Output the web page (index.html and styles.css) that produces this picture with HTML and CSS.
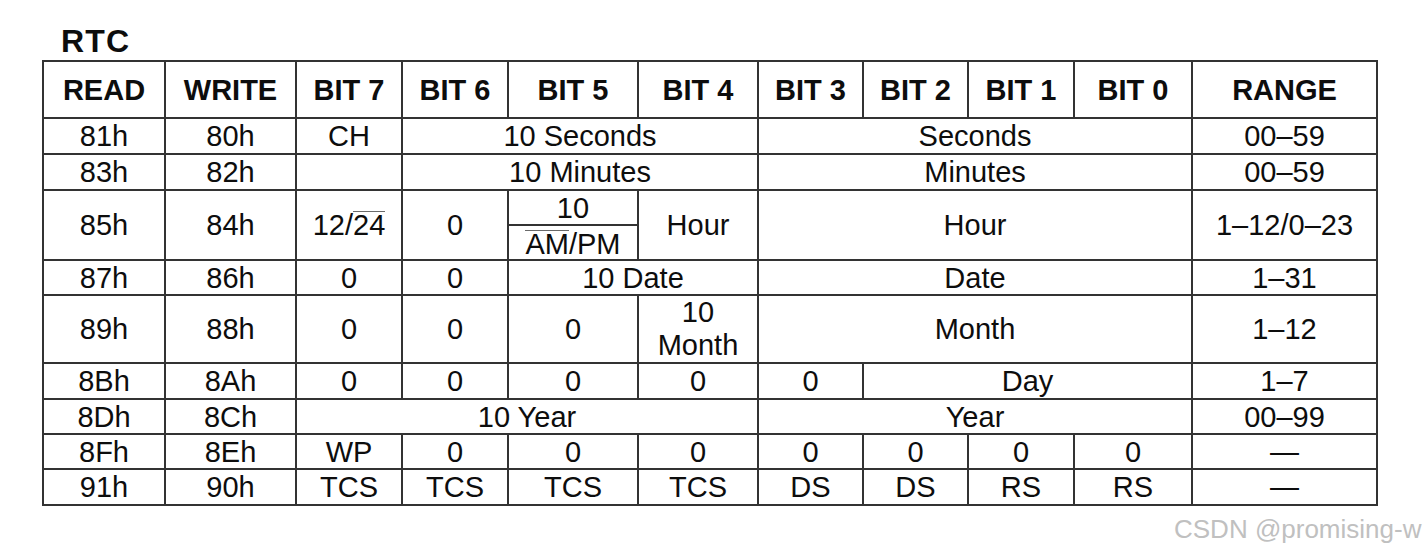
FILE: index.html
```html
<!DOCTYPE html>
<html lang="en">
<head>
<meta charset="utf-8">
<title>RTC</title>
<link rel="stylesheet" href="styles.css">
</head>
<body>
<div class="page">
  <h1 class="title">RTC</h1>
  <table class="rtc">
    <colgroup>
      <col class="c-read"><col class="c-write"><col class="c-b7"><col class="c-b6"><col class="c-b5"><col class="c-b4"><col class="c-b3"><col class="c-b2"><col class="c-b1"><col class="c-b0"><col class="c-range">
    </colgroup>
    <thead>
      <tr class="row-head">
        <th>READ</th><th>WRITE</th><th>BIT 7</th><th>BIT 6</th><th>BIT 5</th><th>BIT 4</th><th>BIT 3</th><th>BIT 2</th><th>BIT 1</th><th>BIT 0</th><th>RANGE</th>
      </tr>
    </thead>
    <tbody>
      <tr class="row-36">
        <td>81h</td><td>80h</td><td>CH</td><td colspan="3">10 Seconds</td><td colspan="4">Seconds</td><td>00–59</td>
      </tr>
      <tr class="row-36">
        <td>83h</td><td>82h</td><td></td><td colspan="3">10 Minutes</td><td colspan="4">Minutes</td><td>00–59</td>
      </tr>
      <tr class="row-70">
        <td>85h</td><td>84h</td><td>12/<span class="bar">24</span></td><td>0</td>
        <td class="split"><div class="split-top">10</div><div class="split-bottom"><span class="bar">AM</span>/PM</div></td>
        <td>Hour</td><td colspan="4">Hour</td><td>1–12/0–23</td>
      </tr>
      <tr class="row-35">
        <td>87h</td><td>86h</td><td>0</td><td>0</td><td colspan="2">10 Date</td><td colspan="4">Date</td><td>1–31</td>
      </tr>
      <tr class="row-68">
        <td>89h</td><td>88h</td><td>0</td><td>0</td><td>0</td><td class="two-line">10<br>Month</td><td colspan="4">Month</td><td>1–12</td>
      </tr>
      <tr class="row-36">
        <td>8Bh</td><td>8Ah</td><td>0</td><td>0</td><td>0</td><td>0</td><td>0</td><td colspan="3">Day</td><td>1–7</td>
      </tr>
      <tr class="row-35">
        <td>8Dh</td><td>8Ch</td><td colspan="4">10 Year</td><td colspan="4">Year</td><td>00–99</td>
      </tr>
      <tr class="row-35">
        <td>8Fh</td><td>8Eh</td><td>WP</td><td>0</td><td>0</td><td>0</td><td>0</td><td>0</td><td>0</td><td>0</td><td>—</td>
      </tr>
      <tr class="row-36">
        <td>91h</td><td>90h</td><td>TCS</td><td>TCS</td><td>TCS</td><td>TCS</td><td>DS</td><td>DS</td><td>RS</td><td>RS</td><td>—</td>
      </tr>
    </tbody>
  </table>
  <div class="watermark">CSDN @promising-w</div>
</div>
</body>
</html>
```
FILE: styles.css
```css
html, body {
  margin: 0;
  padding: 0;
  background: #ffffff;
  overflow: hidden;
}

.page {
  width: 1423px;
  height: 555px;
  padding-top: 25px;
  box-sizing: border-box;
  font-family: "Liberation Sans", Arial, sans-serif;
  color: #0d0d0d;
}

.title {
  margin: 0 0 3px 61px;
  font-size: 32px;
  line-height: 32px;
  letter-spacing: 1.2px;
  font-weight: bold;
  color: #0d0d0d;
}

.rtc {
  margin-left: 42px;
  border-collapse: collapse;
  table-layout: fixed;
  width: 1336px;
}

.c-read { width: 122px; }
.c-write { width: 131px; }
.c-b7 { width: 106px; }
.c-b6 { width: 106px; }
.c-b5 { width: 130px; }
.c-b4 { width: 120px; }
.c-b3 { width: 105px; }
.c-b2 { width: 105px; }
.c-b1 { width: 106px; }
.c-b0 { width: 118px; }
.c-range { width: 185px; }

.rtc th,
.rtc td {
  border: 2px solid #333;
  padding: 0;
  text-align: center;
  vertical-align: middle;
  font-size: 29px;
  line-height: 32px;
  white-space: nowrap;
}

.rtc th {
  font-weight: bold;
}

.rtc td {
  font-weight: normal;
}

.row-head { height: 57px; }
.row-36 { height: 36px; }
.row-35 { height: 35px; }
.row-70 { height: 70px; }
.row-68 { height: 68px; }

.bar {
  display: inline-block;
  line-height: 26px;
  border-top: 1px solid #6a6a6a;
}

.rtc td.split {
  padding: 0;
}

.split-top,
.split-bottom {
  height: 33px;
  display: flex;
  align-items: center;
  justify-content: center;
}

.split-top {
  border-bottom: 2px solid #333;
}

.split-bottom {
  padding-top: 2px;
  box-sizing: border-box;
}

.rtc td.two-line {
  line-height: 33px;
}

.watermark {
  margin: 10px 0 0 1174px;
  font-size: 26px;
  line-height: 26px;
  color: #c0c0c0;
  white-space: nowrap;
}
```
